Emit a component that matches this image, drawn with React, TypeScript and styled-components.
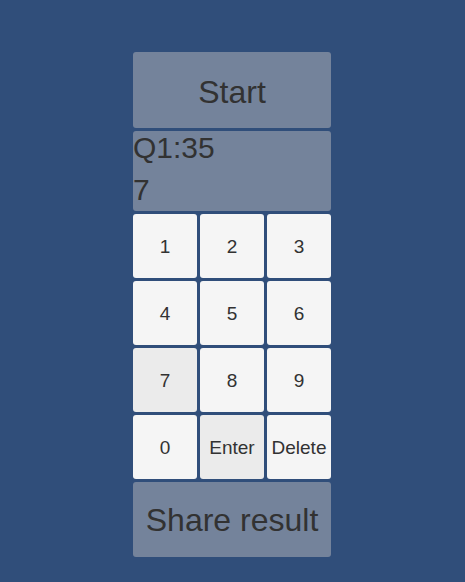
import React from "react";
import styled, { createGlobalStyle } from "styled-components";

const Global = createGlobalStyle`
  html, body {
    margin: 0;
    padding: 0;
    background: #304e7a;
    font-family: "Liberation Sans", Arial, sans-serif;
  }
`;

const Page = styled.div`
  width: 465px;
  height: 582px;
  padding: 52px 0 0 133px;
  box-sizing: border-box;
`;

const Column = styled.div`
  width: 198px;
  display: flex;
  flex-direction: column;
  gap: 3px;
`;

const Panel = styled.div<{ $h: number }>`
  height: ${(p) => p.$h}px;
  background: #74839b;
  border-radius: 3px;
  color: #323232;
  box-sizing: border-box;
`;

const BigButton = styled(Panel)<{ $shift: number }>`
  display: flex;
  align-items: center;
  justify-content: center;
  font-size: 32px;
  padding-top: ${(p) => p.$shift}px;
`;

const Display = styled(Panel)`
  font-size: 30px;
  line-height: 42px;
  overflow: hidden;
`;

const DisplayText = styled.div`
  margin-top: -4px;
`;

const Keypad = styled.div`
  display: grid;
  grid-template-columns: repeat(3, 64px);
  grid-auto-rows: 64px;
  gap: 3px;
`;

const Key = styled.div<{ $pressed?: boolean }>`
  background: ${(p) => (p.$pressed ? "#ebebeb" : "#f5f5f5")};
  border-radius: 3px;
  display: flex;
  align-items: center;
  justify-content: center;
  font-size: 19px;
  color: #323232;
  padding-top: 1px;
  box-sizing: border-box;
`;

const keys = ["1", "2", "3", "4", "5", "6", "7", "8", "9", "0", "Enter", "Delete"];
const pressed = new Set(["7", "Enter"]);

export default function App() {
  return (
    <>
      <Global />
      <Page>
        <Column>
          <BigButton $h={76} $shift={5}>
            Start
          </BigButton>
          <Display $h={80}>
            <DisplayText>
              Q1:35
              <br />7
            </DisplayText>
          </Display>
          <Keypad>
            {keys.map((k) => (
              <Key key={k} $pressed={pressed.has(k)}>
                {k}
              </Key>
            ))}
          </Keypad>
          <BigButton $h={75} $shift={1}>
            Share result
          </BigButton>
        </Column>
      </Page>
    </>
  );
}
